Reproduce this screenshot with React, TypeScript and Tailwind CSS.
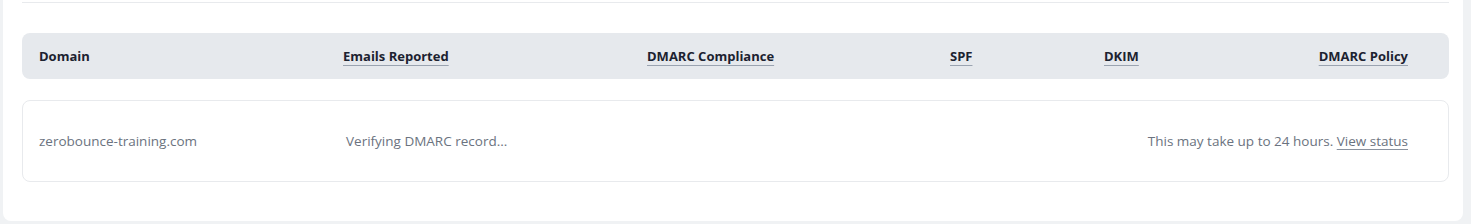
const columns = [
  { label: "Domain", underline: false },
  { label: "Emails Reported", underline: true },
  { label: "DMARC Compliance", underline: true },
  { label: "SPF", underline: true },
  { label: "DKIM", underline: true },
];

const gridCols = "grid grid-cols-[304px_304px_303px_154px_1fr_auto] items-center";

export default function App() {
  return (
    <div
      className="h-[224px] bg-[#f0f2f4] pl-[3px] pr-[8px]"
      style={{ fontFamily: "'Open Sans', 'Noto Sans', sans-serif" }}
    >
      <div className="h-[221px] rounded-b-lg bg-white pl-[19px] pr-[14px] pt-[2px]">
        <div className="border-t border-[#e8eaed]" />

        <div className={`${gridCols} mt-[30px] h-[46px] rounded-lg bg-[#e6e9ed] pl-[17px] pr-[41px] pt-[1px] text-[13px] font-bold text-[#1c2230]`}>
          {columns.map((col) => (
            <span
              key={col.label}
              className={col.underline ? "underline decoration-[#9aa3b0] underline-offset-[4px]" : ""}
            >
              {col.label}
            </span>
          ))}
          <span className="text-right underline decoration-[#9aa3b0] underline-offset-[4px]">
            DMARC Policy
          </span>
        </div>

        <div className={`${gridCols} mt-[21px] h-[82px] rounded-lg border border-[#e8eaed] pl-[16px] pr-[40px] text-[13.5px] text-[#6b7380]`}>
          <span>zerobounce-training.com</span>
          <span className="pl-[3px]">Verifying DMARC record...</span>
          <span />
          <span />
          <span />
          <span className="whitespace-nowrap text-right">
            This may take up to 24 hours.{" "}
            <a href="#" className="underline decoration-[#8a929e] underline-offset-[3px]">
              View status
            </a>
          </span>
        </div>
      </div>
    </div>
  );
}
